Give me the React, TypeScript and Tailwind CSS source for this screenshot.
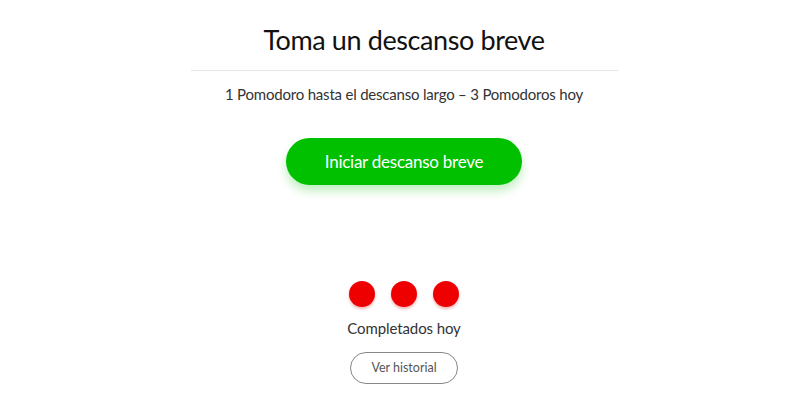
import React from "react";

export default function App() {
  return (
    <div className="w-[800px] h-[400px] bg-white pl-[8px]" style={{ fontFamily: '"Source Sans Pro", Lato, "Noto Sans", sans-serif' }}>
      <div className="flex flex-col items-center">
        <h1 className="mt-[21px] text-[27px] leading-[38px] tracking-[-0.4px] text-[#111] font-normal">Toma un descanso breve</h1>
        <div className="mt-[11px] w-[427px] h-px bg-[#e5e5e5]" />
        <p className="mt-[13px] text-[15px] leading-[20px] tracking-[-0.2px] text-[#333]">1 Pomodoro hasta el descanso largo – 3 Pomodoros hoy</p>
        <button className="mt-[34px] w-[236px] h-[47px] rounded-full bg-[#00c000] text-white text-[17px] tracking-[-0.25px] shadow-[0_6px_10px_rgba(0,192,0,0.25)]">Iniciar descanso breve</button>
        <div className="mt-[96px] flex gap-[16px]">
          <span className="w-[26px] h-[26px] rounded-full bg-[#ee0000] shadow-[0_2px_3px_rgba(200,0,0,0.3)]" />
          <span className="w-[26px] h-[26px] rounded-full bg-[#ee0000] shadow-[0_2px_3px_rgba(200,0,0,0.3)]" />
          <span className="w-[26px] h-[26px] rounded-full bg-[#ee0000] shadow-[0_2px_3px_rgba(200,0,0,0.3)]" />
        </div>
        <p className="mt-[11px] text-[15px] leading-[20px] tracking-[-0.1px] text-[#333]">Completados hoy</p>
        <button className="mt-[14px] w-[108px] h-[32px] rounded-full border border-[#888] text-[12.5px] text-[#555]">Ver historial</button>
      </div>
    </div>
  );
}
